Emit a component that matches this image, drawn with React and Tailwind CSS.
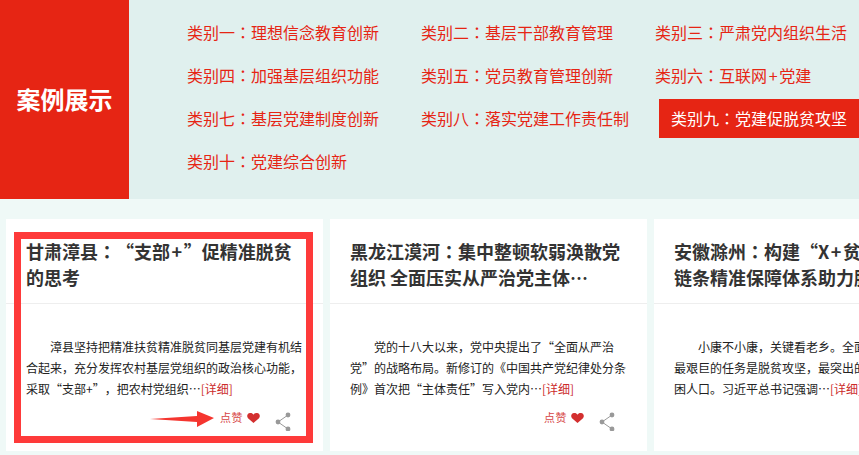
const COLON = '\uFF1A'
const COMMA = '\uFF0C'

const cats = [
  ['类别一', '理想信念教育创新'],
  ['类别二', '基层干部教育管理'],
  ['类别三', '严肃党内组织生活'],
  ['类别四', '加强基层组织功能'],
  ['类别五', '党员教育管理创新'],
  ['类别六', '互联网+党建'],
  ['类别七', '基层党建制度创新'],
  ['类别八', '落实党建工作责任制'],
  ['类别九', '党建促脱贫攻坚'],
  ['类别十', '党建综合创新'],
]

const cards = [
  {
    place: '甘肃漳县',
    title: '“支部+”促精准脱贫的思考',
    body: `漳县坚持把精准扶贫精准脱贫同基层党建有机结合起来${COMMA}充分发挥农村基层党组织的政治核心功能${COMMA}采取“支部+”${COMMA}把农村党组织⋯`,
  },
  {
    place: '黑龙江漠河',
    title: '集中整顿软弱涣散党组织 全面压实从严治党主体…',
    body: `党的十八大以来${COMMA}党中央提出了“全面从严治\n党”的战略布局。新修订的《中国共产党纪律处分条例》首次把“主体责任”写入党内⋯`,
  },
  {
    place: '安徽滁州',
    title: '构建“X+贫困户”利益链条精准保障体系助力脱贫攻坚',
    body: `小康不小康${COMMA}关键看老乡。全面建成小康社会${COMMA}最艰巨的任务是脱贫攻坚${COMMA}最突出的短板在于农村贫困人口。习近平总书记强调⋯`,
  },
]

// the quotes take a full em here, the plus is wider in headings than in body text
const Rich = ({ text, plus = 'w-[.76em]' }) =>
  text.split(/([“”+])/).map((part, i) => {
    if (part === '“') return <span key={i} className="inline-block w-[1em] indent-0 text-right">“</span>
    if (part === '”') return <span key={i} className="inline-block w-[1em] indent-0 text-left">”</span>
    if (part === '+') return <span key={i} className={`inline-block indent-0 text-center ${plus}`}>+</span>
    return part
  })

const Colon = () => <span className="font-['Noto_Sans_CJK_TC']">{COLON}</span>

const CatLink = ({ label, name }) => {
  const active = label === '类别九'

  return (
    <div className={active
      ? 'ml-1 flex h-[39px] items-center self-center bg-[#e62514] px-3 pb-[2px] whitespace-nowrap text-white'
      : 'flex items-center pb-[2px] whitespace-nowrap text-[#e62514]'}>
      <span>{label}<Colon /><Rich text={name} /></span>
    </div>
  )
}

const ShareIcon = () => (
  <svg width="16" height="19" viewBox="0 0 16 19" fill="#999" stroke="#999">
    <path d="M13 3 3 10l10 7" fill="none" strokeWidth="1" />
    <circle cx="13" cy="3" r="2.4" stroke="none" />
    <circle cx="3" cy="10" r="2.4" stroke="none" />
    <circle cx="13" cy="17" r="2.4" stroke="none" />
  </svg>
)

const Card = ({ place, title, body }) => (
  <div className="w-[317px] h-[232px] shrink-0 bg-white">
    <h3 className="h-[85px] border-b border-[#eeeeee] px-5 pt-[19px] text-[18px] leading-[26px] font-bold text-[#333]">
      {place}<Colon /><Rich text={title} />
    </h3>
    <p className="px-5 pt-[32px] text-[12px] leading-[21px] whitespace-pre-line text-[#222] indent-6">
      <Rich text={body} plus="w-[.55em]" /><span className="text-[#cc2b2b]">[详细]</span>
    </p>
    <div className="mt-[13px] flex items-start justify-end pr-8">
      <span className="text-[11px] leading-[11px] tracking-[.5px] text-[#d64545]">点赞</span>
      <svg className="mt-px ml-1" width="13" height="10" viewBox="0 0 13 10" fill="#d32f2f">
        <path d="M6.5 10 1 5.2C-.6 3.4.2.4 3 .1c1.500-.2 2.800.5 3.500 1.700C7.200.6 8.500-.1 10 .1c2.800.3 3.600 3.300 2 5.100z" />
      </svg>
      <span className="ml-[15px] flex"><ShareIcon /></span>
    </div>
  </div>
)

export default function App() {
  return (
    <div className="relative h-[455px] w-[859px] overflow-hidden bg-[#eff9f7] font-['Noto_Sans_CJK_SC','Liberation_Sans',sans-serif]">
      <div className="flex h-[199px] bg-[#e0f0ee]">
        <div className="flex w-[129px] items-center justify-center bg-[#e62514] pb-[2px] text-[24px] font-bold text-white">
          案例展示
        </div>
        <div className="grid flex-1 auto-rows-[43px] grid-cols-[234px_234px_1fr] pt-[11px] pl-[58px] text-[16px]">
          {cats.map(([label, name]) => <CatLink key={label} label={label} name={name} />)}
        </div>
      </div>

      <div className="flex gap-[7px] pt-5 pl-[6px]">
        {cards.map((c) => <Card key={c.place} {...c} />)}
      </div>

      {/* annotation drawn over the screenshot */}
      <div className="absolute top-[232px] left-[14px] h-[211px] w-[299px] border-[7px] border-[#fe3a3a]" />
      <svg className="absolute top-[410px] left-[150px]" width="64" height="18" viewBox="0 0 64 18" fill="#f5352f">
        <path d="M0 9 47 6V1l17 7-17 9v-5z" />
      </svg>
    </div>
  )
}
